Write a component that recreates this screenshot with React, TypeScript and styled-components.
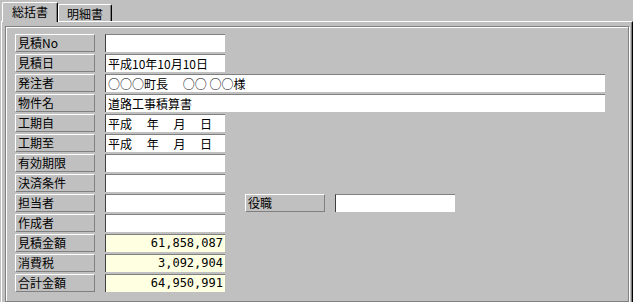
import React from 'react';
import styled, { createGlobalStyle } from 'styled-components';

const GlobalStyle = createGlobalStyle`
  html, body {
    margin: 0;
    padding: 0;
    background: #c0c0c0;
  }
  body {
    font-family: "Noto Sans CJK JP", "DejaVu Sans", sans-serif;
    font-size: 12px;
    color: #000;
  }
`;

const Window = styled.div`
  width: 633px;
  height: 302px;
  background: #c0c0c0;
  display: flex;
  flex-direction: column;
  overflow: hidden;
`;

const TabStrip = styled.div`
  display: flex;
  align-items: flex-end;
  height: 21px;
  padding-left: 2px;
`;

const Tab = styled.div<{ active?: boolean }>`
  box-sizing: border-box;
  height: ${({ active }) => (active ? '20px' : '17px')};
  width: ${({ active }) => (active ? '56px' : '54px')};
  padding-top: 1px;
  border-top: 1px solid #fff;
  border-left: 1px solid #fff;
  border-right: 1px solid #000;
  box-shadow: inset -1px 0 0 #808080;
  border-radius: 2px 2px 0 0;
  text-align: center;
  line-height: 16px;
  font-size: 12px;
  position: relative;
  z-index: ${({ active }) => (active ? 2 : 1)};
  margin-bottom: ${({ active }) => (active ? '-1px' : '0')};
  background: #c0c0c0;
`;

const Panel = styled.div`
  flex: 1;
  margin-left: 1px;
  border-top: 1px solid #fff;
  border-left: 1px solid #fff;
  border-right: 1px solid #000;
  box-shadow: inset -1px 0 0 #808080;
  padding: 4px 3px 0 3px;
  display: flex;
`;

const GroupBox = styled.div`
  flex: 1;
  border: 1px solid #808080;
  box-shadow: 1px 1px 0 #fff, inset 1px 1px 0 #fff;
  padding: 7px 0 0 9px;
  display: flex;
  flex-direction: column;
  gap: 2px;
`;

const Row = styled.div`
  display: flex;
  gap: 10px;
  height: 18px;
`;

const Label = styled.div<{ offset?: number }>`
  box-sizing: border-box;
  width: 80px;
  height: 18px;
  border-top: 1px solid #fff;
  border-left: 1px solid #fff;
  border-right: 1px solid #808080;
  border-bottom: 1px solid #808080;
  padding-left: 2px;
  line-height: 16px;
  white-space: nowrap;
  margin-left: ${({ offset }) => (offset ? `${offset}px` : '0')};
`;

const Field = styled.div<{ wide?: boolean; amount?: boolean }>`
  box-sizing: border-box;
  width: ${({ wide }) => (wide ? '500px' : '120px')};
  height: 18px;
  background: ${({ amount }) => (amount ? '#ffffe1' : '#fff')};
  border-top: 1px solid #808080;
  border-left: 1px solid #404040;
  padding: 0 2px 0 2px;
  line-height: 17px;
  white-space: pre;
  overflow: hidden;
  text-align: ${({ amount }) => (amount ? 'right' : 'left')};
  font-family: ${({ amount }) =>
    amount ? '"DejaVu Sans Mono", "Liberation Mono", monospace' : 'inherit'};
`;

type Item = { label: string; value?: string; wide?: boolean; amount?: boolean };

const ITEMS: Item[] = [
  { label: '見積No', value: '' },
  { label: '見積日', value: '平成10年10月10日' },
  { label: '発注者', value: '○○○町長　 ○○ ○○様', wide: true },
  { label: '物件名', value: '道路工事積算書', wide: true },
  { label: '工期自', value: '平成　 年　 月　 日' },
  { label: '工期至', value: '平成　 年　 月　 日' },
  { label: '有効期限' },
  { label: '決済条件' },
  { label: '担当者' },
  { label: '作成者' },
  { label: '見積金額', value: '61,858,087', amount: true },
  { label: '消費税', value: '3,092,904', amount: true },
  { label: '合計金額', value: '64,950,991', amount: true },
];

const App: React.FC = () => {
  return (
    <Window>
      <GlobalStyle />
      <TabStrip>
        <Tab active>総括書</Tab>
        <Tab>明細書</Tab>
      </TabStrip>
      <Panel>
        <GroupBox>
          {ITEMS.map((item) => (
            <Row key={item.label}>
              <Label>{item.label}</Label>
              <Field wide={item.wide} amount={item.amount}>
                {item.value}
              </Field>
              {item.label === '担当者' && (
                <>
                  <Label offset={10}>役職</Label>
                  <Field />
                </>
              )}
            </Row>
          ))}
        </GroupBox>
      </Panel>
    </Window>
  );
};

export default App;
